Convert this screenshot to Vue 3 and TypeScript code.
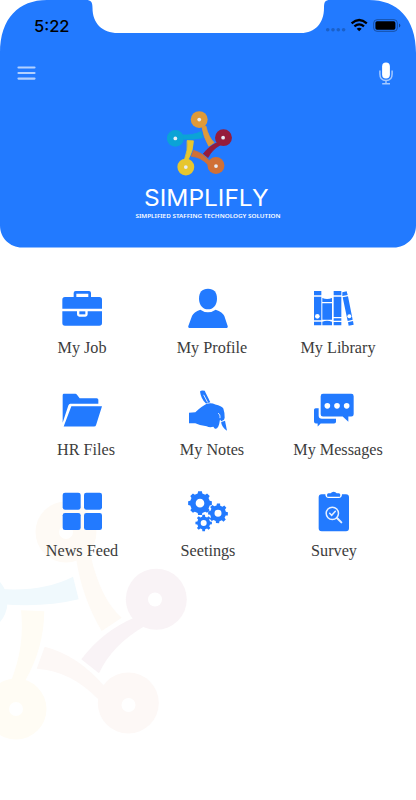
<script setup lang="ts">
interface Arm {
  name: string
  cx: number
  cy: number
  hx: number
  hy: number
  d: string
}

interface Tile {
  id: string
  label: string
  viewBox: string
  nudged?: boolean
}

const arms: Arm[] = [
  { name: 'amber', cx: 66, cy: 532, hx: 66, hy: 532, d: 'M76 558Q82 598 101.7 631L121.7 617.7Q101 600 90.7 556Z' },
  { name: 'teal', cx: -23, cy: 602, hx: -23, hy: 602, d: 'M0 589Q43 592 73 576.7L78.7 599.3Q43 608 0 604Z' },
  { name: 'yellow', cx: 16, cy: 709, hx: 16, hy: 709, d: 'M21 610.3L44.3 611.3Q44 648 25 681L11 681Q25 646 21 610.3Z' },
  { name: 'coral', cx: 128.3, cy: 703, hx: 128.5, hy: 705, d: 'M44.7 646.7Q78 655 105 687L98.3 699.3Q71 671 36.7 668.7Z' },
  { name: 'red', cx: 156.3, cy: 599.3, hx: 155, hy: 599.5, d: 'M134 617.8Q103 631 81.3 659.3L99 673.3Q112 645 144 626.5Z' },
]

const tiles: Tile[] = [
  { id: 'job', label: 'My Job', viewBox: '66 24 120 120' },
  { id: 'profile', label: 'My Profile', viewBox: '69 24 120 120', nudged: true },
  { id: 'library', label: 'My Library', viewBox: '72 24 120 120', nudged: true },
  { id: 'files', label: 'HR Files', viewBox: '66 28.5 120 120', nudged: true },
  { id: 'notes', label: 'My Notes', viewBox: '69 28.5 120 120', nudged: true },
  { id: 'messages', label: 'My Messages', viewBox: '87 28.5 120 120', nudged: true },
  { id: 'news', label: 'News Feed', viewBox: '186 33 120 120' },
  { id: 'settings', label: 'Seetings', viewBox: '69 33 120 120' },
  { id: 'survey', label: 'Survey', viewBox: '447 33 120 120' },
]

// Outline of a cog with flat-topped teeth and a round hole in the middle.
function gear(cx: number, cy: number, outer: number, root: number, hole: number, teeth: number, turn: number): string {
  const step = (Math.PI * 2) / teeth
  const pts: string[] = []
  for (let i = 0; i < teeth; i++) {
    const a = turn + i * step
    const corners: [number, number][] = [
      [root, -0.3],
      [outer, -0.2],
      [outer, 0.2],
      [root, 0.3],
    ]
    for (const [r, k] of corners) {
      pts.push(`${(cx + r * Math.cos(a + k * step)).toFixed(2)} ${(cy + r * Math.sin(a + k * step)).toFixed(2)}`)
    }
  }
  return `M${pts.join('L')}Z M${cx - hole} ${cy}a${hole} ${hole} 0 1 0 ${hole * 2} 0a${hole} ${hole} 0 1 0 ${-hole * 2} 0Z`
}

const gears: string[] = [
  gear(105, 69.5, 36, 30, 13, 8, Math.PI / 2),
  gear(159, 100, 30, 24, 10.5, 8, 0.05),
  gear(116, 129, 25, 19.5, 9, 8, Math.PI / 2),
]
</script>

<template>
  <div class="screen">
    <svg class="watermark" viewBox="-54 500 242 241" aria-hidden="true">
      <g v-for="arm in arms" :key="arm.name" :class="arm.name">
        <path :d="arm.d" />
        <circle :cx="arm.cx" :cy="arm.cy" r="30.5" />
        <circle class="hole" :cx="arm.hx" :cy="arm.hy" r="7" />
      </g>
    </svg>

    <header class="header">
      <svg class="backdrop" viewBox="0 0 416 248" aria-hidden="true">
        <path d="M0 53C0 18 19 0 47 0H86C91 0 92.5 2 92.5 8C92.5 23 102 33 118 33H301C315 33 324 23 324 8C324 2 325 0 330 0H369C397 0 416 18 416 53V225.5C416 238 406 247.5 394 247.5H22C10 247.5 0 238 0 225.5Z" />
      </svg>

      <div class="status">
        <span class="time">5:22</span>
        <svg class="indicators" viewBox="325 17 76 17" aria-hidden="true">
          <g class="dots">
            <circle cx="327.7" cy="29.8" r="1.8" />
            <circle cx="333" cy="29.8" r="1.8" />
            <circle cx="338.3" cy="29.8" r="1.8" />
            <circle cx="343.6" cy="29.8" r="1.8" />
          </g>
          <g class="wifi">
            <path d="M351.6 23.3Q359.2 16.7 366.8 23.3" />
            <path d="M354.4 26.4Q359.2 22.3 364 26.4" />
            <path class="solid" d="M359.2 31.2L356.7 28.7Q359.2 26.6 361.7 28.7Z" />
          </g>
          <rect class="shell" x="373.7" y="19.7" width="23.6" height="11.6" rx="3.3" />
          <rect x="375.4" y="21.3" width="20" height="8.4" rx="1.6" />
          <path class="cap" d="M399 23.5q1.3 .6 1.3 2t-1.3 2z" />
        </svg>
      </div>

      <nav class="toolbar">
        <button class="icon-button" type="button" aria-label="Menu">
          <svg class="menu" viewBox="0 0 19 16"><path d="M1.5 2.5H17.5M1.5 8H17.5M1.5 13.6H17.5" /></svg>
        </button>
        <button class="icon-button" type="button" aria-label="Voice">
          <svg class="mic" viewBox="0 0 14 23">
            <rect x="3.1" y=".5" width="7.8" height="16" rx="3.9" />
            <path d="M.9 8.5V12Q.9 18.5 7 18.5T13.1 12V8.5M7 18.5V21.8M3.2 21.8H11" />
          </svg>
        </button>
      </nav>

      <div class="brand">
        <svg class="emblem" viewBox="-54 500 242 241" aria-hidden="true">
          <g v-for="arm in arms" :key="arm.name" :class="arm.name">
            <path :d="arm.d" />
            <circle :cx="arm.cx" :cy="arm.cy" r="31.5" />
            <circle class="hole" :cx="arm.hx" :cy="arm.hy" r="7" />
          </g>
        </svg>
        <svg class="wordmark" viewBox="0 0 150 50">
          <text class="name" x="11" y="29.9" textLength="124.5" lengthAdjust="spacingAndGlyphs">SIMPLIFLY</text>
          <text class="tagline" x="2.5" y="42.3" textLength="145" lengthAdjust="spacingAndGlyphs">SIMPLIFIED STAFFING TECHNOLOGY SOLUTION</text>
        </svg>
      </div>
    </header>

    <main class="grid">
      <a v-for="tile in tiles" :key="tile.id" class="tile">
        <svg class="glyph" :viewBox="tile.viewBox" aria-hidden="true">
          <g v-if="tile.id === 'job'">
            <path fill-rule="evenodd" d="M101 51V39Q101 33 107 33H147Q153 33 153 39V51H178Q186 51 186 59V86H67V59Q67 51 75 51ZM109 51H145V41H109Z" />
            <path d="M67 94H111V103Q111 110 118 110H136Q143 110 143 103V94H186V129Q186 137 178 137H75Q67 137 67 129Z" />
            <rect x="118" y="94" width="18" height="9" />
          </g>
          <g v-else-if="tile.id === 'profile'">
            <path d="M129 26C147 26 156 36 156 56C156 75 144 88 129 88S102 75 102 56C102 36 111 26 129 26Z" />
            <path d="M106 89Q129 105 152 89Q173 96 178 108L188 138Q190 144 182 144H76Q68 144 70 138L81 108Q86 96 106 89Z" />
          </g>
          <g v-else-if="tile.id === 'library'">
            <path d="M72 33H94V46H72ZM72 50H94V121H72ZM72 125H94V136H72ZM97 54Q111 60 126 54V66H97ZM97 70H126V119H97ZM97 125Q111 119 126 125V136H97ZM131 33H154V46H131ZM131 50H154V111H131ZM131 115H154V122H131ZM131 126H154V136H131ZM157 37L170 34L173 45L157 48ZM158 52L174 49L188 119L173 123ZM174 127L189 123L191 134L176 137Z" />
            <circle class="cut" cx="82" cy="109" r="7" />
            <circle class="cut" cx="178" cy="109" r="6" />
          </g>
          <g v-else-if="tile.id === 'files'">
            <path d="M68 44Q68 40 72 40H106Q109 40 111 43L119 53H170Q175 53 175 58V70H91Q87 70 85 75L68 127Z" />
            <path d="M94 77H186L168 134Q167 138 162 138H71Z" />
          </g>
          <g v-else-if="tile.id === 'notes'">
            <path d="M105 33Q109 28 119 31L136 65L123 69Q108 56 105 33Z" />
            <path d="M72 97L91 95Q111 77 125 70Q139 66 151 72Q170 77 175 84Q180 99 179 112Q178 122 171 125L165 117Q163 132 160 138Q155 147 149 144L145 139Q133 142 125 137Q107 136 91 128H72Z" />
            <path d="M168 125L180 121L186 151Q172 142 168 125Z" />
            <path class="line" d="M116 43L128 66M159 99Q166 99 165 113M165 126L177 119" />
          </g>
          <g v-else-if="tile.id === 'messages'">
            <path d="M114 40H199Q206 40 206 47V101Q206 108 199 108H190V124L173 108H114Q107 108 107 101V47Q107 40 114 40Z" />
            <path d="M92 83H101V106Q101 115 111 115H153V124Q153 129 147 129H107L98 138V129H93Q87 129 87 123V88Q87 83 92 83Z" />
            <g class="cut">
              <circle cx="127" cy="76" r="8.5" />
              <circle cx="156" cy="76" r="8.5" />
              <circle cx="185" cy="76" r="8.5" />
            </g>
          </g>
          <g v-else-if="tile.id === 'news'">
            <rect x="188" y="38" width="54" height="51" rx="7" />
            <rect x="252" y="38" width="54" height="51" rx="7" />
            <rect x="188" y="99" width="54" height="51" rx="7" />
            <rect x="252" y="99" width="54" height="51" rx="7" />
          </g>
          <g v-else-if="tile.id === 'settings'">
            <path v-for="d in gears" :key="d" :d="d" fill-rule="evenodd" />
          </g>
          <g v-else>
            <path d="M470 43H481Q481 54 491 54H521Q531 54 531 43H543Q552 43 552 52V145Q552 154 543 154H470Q461 154 461 145V52Q461 43 470 43Z" />
            <path d="M487 50Q484 41 491 40H497Q500 35 506 35T515 40H521Q528 41 525 50Z" />
            <g class="lens">
              <circle cx="502" cy="100" r="18.5" />
              <path d="M494 100L500 106L511 94" />
              <path class="handle" d="M516 114L529 127" />
            </g>
          </g>
        </svg>
        <span class="label" :class="{ nudged: tile.nudged }">{{ tile.label }}</span>
      </a>
    </main>
  </div>
</template>

<style>
body {
  margin: 0;
  background: #fff;
}
</style>

<style scoped>
.screen {
  position: relative;
  width: 416px;
  height: 800px;
  overflow: hidden;
  background: #fff;
}

.watermark {
  position: absolute;
  left: -54px;
  top: 500px;
  width: 242px;
  height: 241px;
}

.watermark .amber { fill: #fefaf5; }
.watermark .teal { fill: #f0f9fd; }
.watermark .yellow { fill: #fffcf4; }
.watermark .coral { fill: #fdf8f6; }
.watermark .red { fill: #f9f3f6; }

.emblem .amber { fill: #df9a39; stroke: #df9a39; }
.emblem .teal { fill: #0ba3d6; stroke: #0ba3d6; }
.emblem .yellow { fill: #e7c62f; stroke: #e7c62f; }
.emblem .coral { fill: #d07036; stroke: #d07036; }
.emblem .red { fill: #951c3c; stroke: #951c3c; }

.emblem path { stroke-width: 3; }
.emblem circle { stroke: none; }

.watermark .hole { fill: #fff; }
.emblem .hole { fill: #e8edf5; }

.header {
  position: relative;
  display: flex;
  flex-direction: column;
  height: 248px;
}

.backdrop {
  position: absolute;
  inset: 0;
  width: 416px;
  height: 248px;
  fill: #227aff;
}

.status {
  position: relative;
  display: flex;
  justify-content: space-between;
  align-items: flex-start;
  height: 40px;
  padding: 17px 15px 0 34px;
  box-sizing: border-box;
}

.time {
  font: 500 16.5px/18px Inter, sans-serif;
  color: #000;
}

.indicators {
  width: 76px;
  height: 17px;
}

.dots { fill: #1a60c9; }

.wifi {
  fill: none;
  stroke: #000;
  stroke-width: 2.3;
}

.wifi .solid {
  fill: #000;
  stroke: none;
}

.shell {
  fill: none;
  stroke: #164fa5;
  stroke-width: 1;
}

.cap { fill: #123f86; }

.toolbar {
  position: relative;
  display: flex;
  justify-content: space-between;
  align-items: center;
  height: 66px;
  padding: 0 23px 0 17px;
}

.icon-button {
  display: flex;
  padding: 0;
  border: 0;
  background: none;
}

.menu {
  width: 19px;
  height: 16px;
  stroke: #b3d1ff;
  stroke-width: 2.2;
  stroke-linecap: round;
}

.mic {
  width: 14px;
  height: 23px;
  fill: #fff;
}

.mic path {
  fill: none;
  stroke: #a5c9ff;
  stroke-width: 1.5;
}

.brand {
  position: relative;
  display: flex;
  flex-direction: column;
  align-items: center;
  padding-top: 4.9px;
}

.emblem {
  width: 65px;
  height: 64.7px;
  margin-right: 18px;
}

.wordmark {
  width: 150px;
  height: 50px;
  fill: #fff;
}

.name {
  font: 400 23px Inter, sans-serif;
}

.tagline {
  font: 600 5.9px "Noto Sans", sans-serif;
}

.grid {
  position: relative;
  display: grid;
  grid-template-columns: repeat(3, 126px);
  grid-auto-rows: 101.5px;
  padding: 40px 0 0 19px;
}

.tile {
  display: flex;
  flex-direction: column;
  align-items: center;
}

.glyph {
  width: 40px;
  height: 40px;
  overflow: visible;
  fill: #227aff;
}

.cut { fill: #fff; }

.line {
  fill: none;
  stroke: #fff;
  stroke-width: 2.5;
}

.lens {
  fill: none;
  stroke: #e6f0ff;
  stroke-width: 4.5;
  stroke-linecap: round;
}

.lens .handle { stroke-width: 6; }

.label {
  margin-top: 10px;
  font: 400 16.2px/20px "Liberation Serif", serif;
  white-space: nowrap;
  color: #3c3c3c;
}

.label.nudged {
  padding-left: 8px;
}
</style>
